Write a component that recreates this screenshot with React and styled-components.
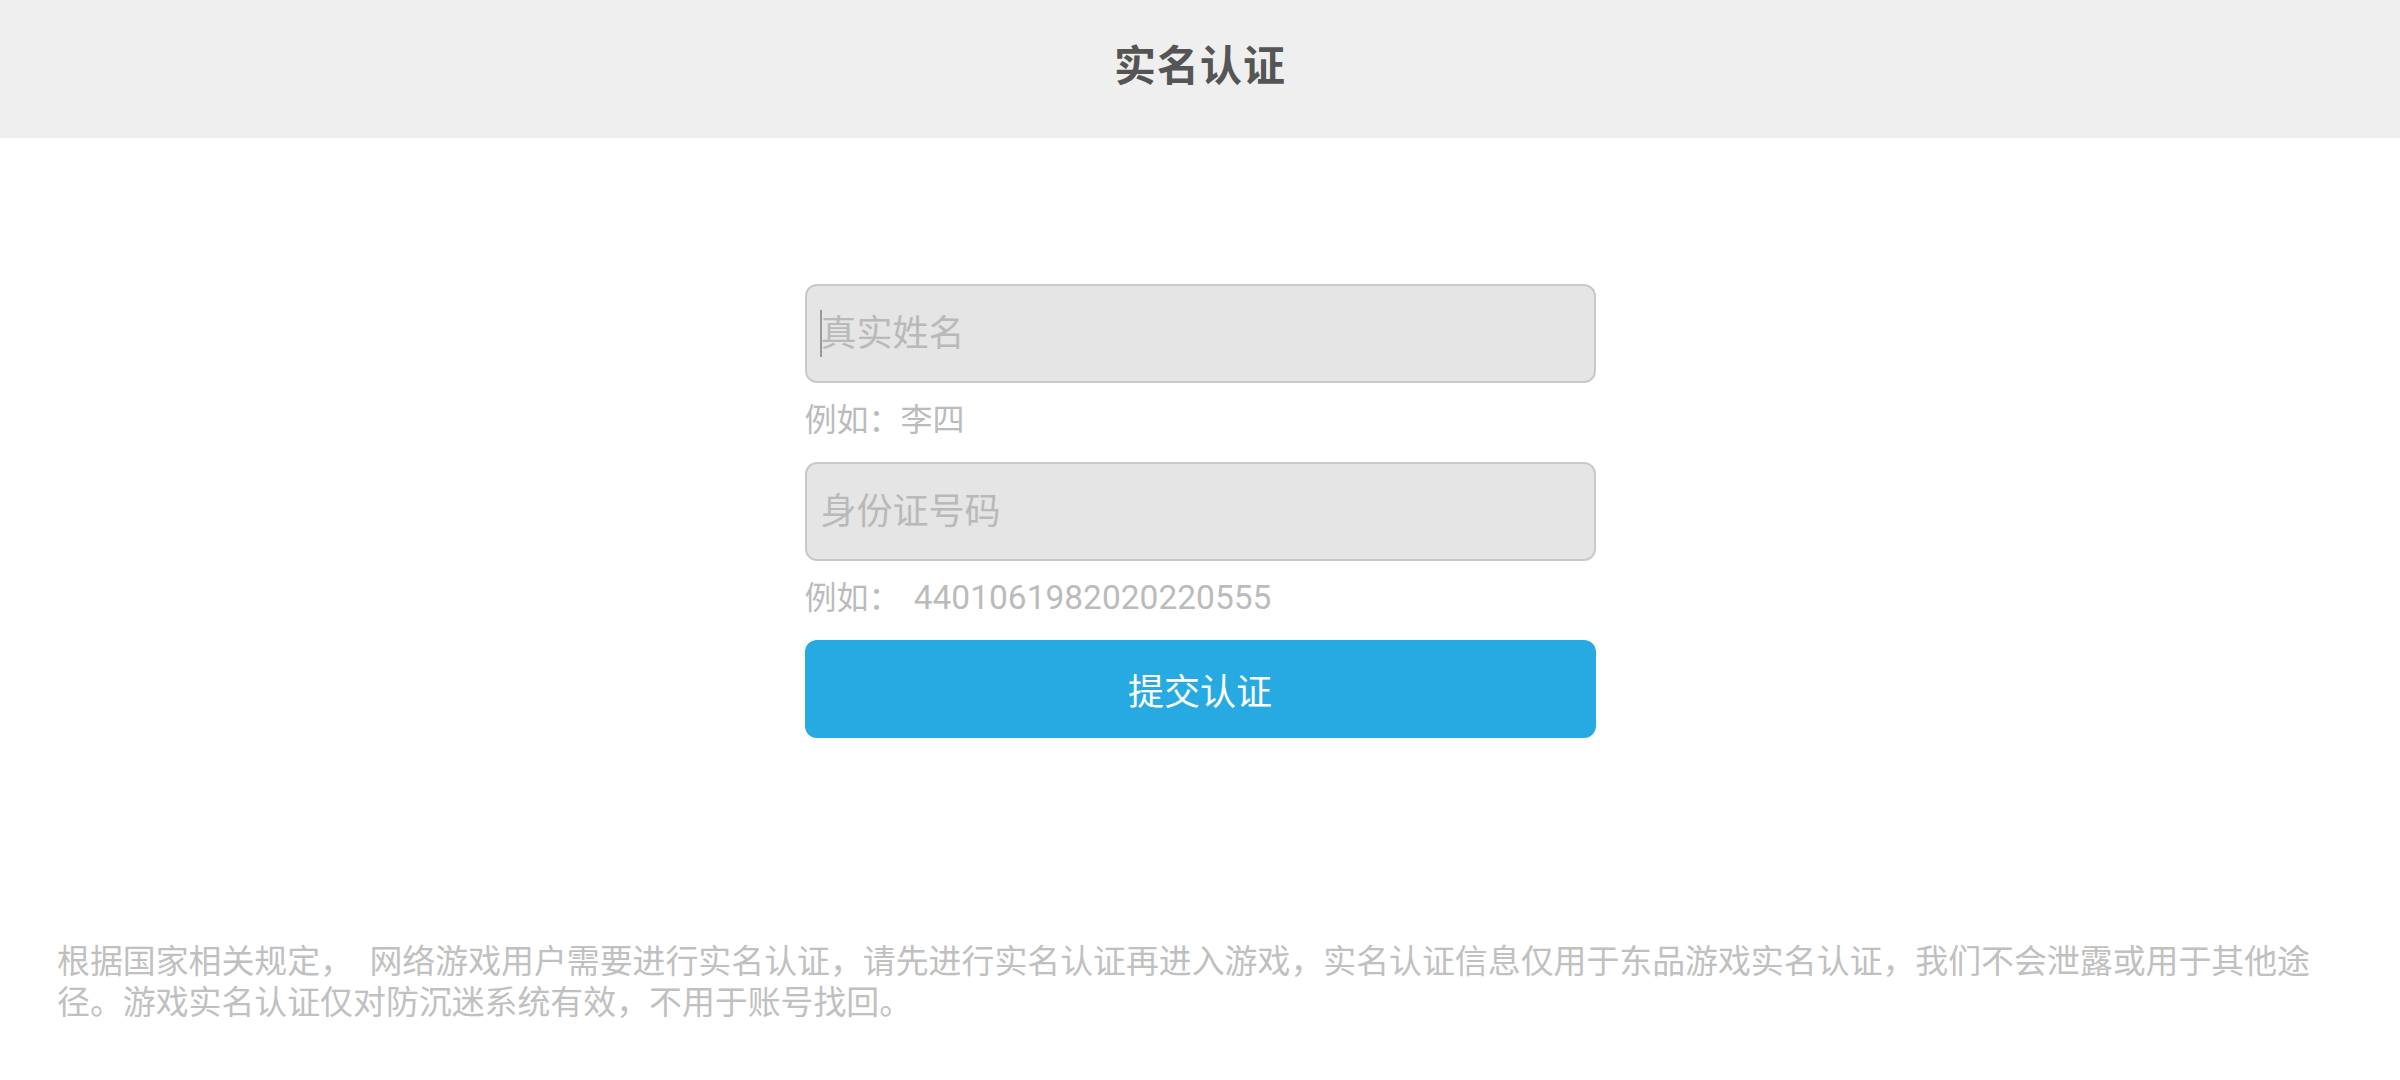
import React from "react";
import styled, { createGlobalStyle } from "styled-components";

const GlobalStyle = createGlobalStyle`
  html, body {
    margin: 0;
    padding: 0;
    background: #ffffff;
  }
  body {
    font-family: "Noto Sans CJK SC", "Noto Sans", sans-serif;
  }
`;

const Page = styled.div`
  min-height: 100vh;
  display: flex;
  flex-direction: column;
  background: #ffffff;
`;

const Header = styled.header`
  height: 138px;
  background: #efefef;
  display: flex;
  align-items: center;
  justify-content: center;
`;

const Title = styled.h1`
  margin: 0 0 14px;
  font-size: 42px;
  font-weight: 700;
  color: #555555;
  letter-spacing: 1px;
`;

const Main = styled.main`
  flex: 1;
  display: flex;
  justify-content: center;
  padding-top: 146px;
`;

const Form = styled.form`
  width: 791px;
  display: flex;
  flex-direction: column;
`;

const Field = styled.div`
  position: relative;

  &::after {
    content: "";
    display: ${(p) => (p.$focused ? "block" : "none")};
    position: absolute;
    left: 15px;
    top: 26px;
    width: 2px;
    height: 47px;
    background: #9a9a9a;
  }
`;

const Input = styled.input`
  box-sizing: border-box;
  display: block;
  width: 100%;
  height: 99px;
  padding: 0 14px 8px;
  border: 2px solid #c9c9c9;
  border-radius: 12px;
  background: #e5e5e5;
  font-family: inherit;
  font-size: 36px;
  color: #333;
  outline: none;
  caret-color: transparent;

  &::placeholder {
    color: #b9b9b9;
  }
`;

const Hint = styled.div`
  height: 44px;
  margin: 12px 0 23px;
  line-height: 44px;
  font-size: 32px;
  color: #bbbbbb;
  white-space: pre;
  overflow: hidden;

  span {
    margin-left: 6px;
    font-family: "Roboto", "Noto Sans", sans-serif;
    font-size: 33.5px;
    line-height: 44px;
  }
`;

const SubmitButton = styled.button`
  height: 98px;
  border: none;
  border-radius: 12px;
  background: #27aae2;
  color: #ffffff;
  font-family: inherit;
  font-size: 36px;
  cursor: pointer;
`;

const Notice = styled.footer`
  padding: 0 80px 60px 57px;
  font-size: 32.9px;
  line-height: 41px;
  color: #c0c0c0;
`;

export default function App() {
  return (
    <Page>
      <GlobalStyle />
      <Header>
        <Title>实名认证</Title>
      </Header>
      <Main>
        <Form onSubmit={(e) => e.preventDefault()}>
          <Field $focused>
            <Input placeholder="真实姓名" />
          </Field>
          <Hint>例如：李四</Hint>
          <Field>
            <Input placeholder="身份证号码" />
          </Field>
          <Hint>
            例如： <span>4401061982020220555</span>
          </Hint>
          <SubmitButton type="submit">提交认证</SubmitButton>
        </Form>
      </Main>
      <Notice>
        根据国家相关规定，　网络游戏用户需要进行实名认证，请先进行实名认证再进入游戏，实名认证信息仅用于东品游戏实名认证，我们不会泄露或用于其他途径。游戏实名认证仅对防沉迷系统有效，不用于账号找回。
      </Notice>
    </Page>
  );
}
